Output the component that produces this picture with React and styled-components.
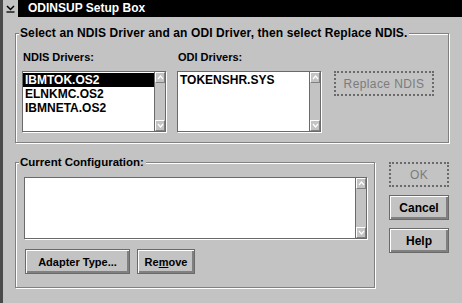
import React from 'react';
import styled, { createGlobalStyle, css } from 'styled-components';

const GlobalStyle = createGlobalStyle`
  html, body {
    margin: 0;
    padding: 0;
    background: #c3c3c3;
  }
  body {
    font-family: "Liberation Sans", Arial, sans-serif;
    font-weight: bold;
    color: #000;
  }
`;

const Window = styled.div`
  width: 462px;
  height: 303px;
  box-sizing: border-box;
  background: #c3c3c3;
  border-left: 3px solid #4a4a4a;
  display: flex;
  flex-direction: column;
`;

const TitleBar = styled.div`
  height: 17px;
  display: flex;
  align-items: stretch;
`;

const SysMenu = styled.div`
  width: 15px;
  display: flex;
  align-items: center;
  justify-content: center;
  background: #c3c3c3;
`;

const Title = styled.div`
  flex: 1;
  background: #000;
  color: #fff;
  font-size: 12px;
  line-height: 17px;
  padding-left: 10px;
`;

const Body = styled.div`
  display: grid;
  grid-template-columns: 360px 60px;
  column-gap: 14px;
  row-gap: 19px;
  padding: 16px 0 0 12px;
`;

const Group = styled.div`
  position: relative;
  box-sizing: border-box;
  border: 1px solid #808080;
  box-shadow: 1px 1px 0 #fff, inset 1px 1px 0 #fff;
  ${p => p.wide && css`grid-column: 1 / span 2;`}
  height: ${p => p.h}px;
  padding: ${p => p.pad};
`;

const Legend = styled.div`
  position: absolute;
  top: -8px;
  left: 3px;
  padding: 0 2px 0 1px;
  background: #c3c3c3;
  font-size: ${p => p.size || 11}px;
  letter-spacing: ${p => p.spacing || 0}px;
  line-height: 15px;
  white-space: nowrap;
`;

const DriverRow = styled.div`
  display: flex;
  align-items: flex-start;
`;

const Column = styled.div`
  width: 144px;
  margin-right: ${p => p.gap}px;
`;

const ColLabel = styled.div`
  font-size: 11px;
  line-height: 14px;
  height: 14px;
  margin-bottom: 7px;
  padding-left: 1px;
  white-space: nowrap;
`;

const ListFrame = styled.div`
  display: flex;
  height: ${p => p.h}px;
  box-sizing: border-box;
  border: 1px solid #6a6a6a;
  box-shadow: 1px 1px 0 #fff;
`;

const ListBody = styled.div`
  flex: 1;
  background: #fff;
  padding-top: 1px;
  overflow: hidden;
`;

const Item = styled.div`
  height: 14px;
  line-height: 14px;
  font-size: 12px;
  padding-left: 2px;
  white-space: nowrap;
  ${p => p.selected && css`
    background: #000;
    color: #fff;
  `}
`;

const ScrollBar = styled.div`
  width: 10px;
  background: #c3c3c3;
  border-left: 1px solid #6a6a6a;
  display: flex;
  flex-direction: column;
  justify-content: space-between;
`;

const Arrow = styled.div`
  height: 11px;
  box-sizing: border-box;
  border-top: 1px solid #fff;
  border-left: 1px solid #fff;
  border-right: 1px solid #808080;
  border-bottom: 1px solid #808080;
  display: flex;
  align-items: center;
  justify-content: center;
`;

const Button = styled.div`
  box-sizing: border-box;
  width: ${p => p.w}px;
  height: ${p => p.h || 25}px;
  display: flex;
  align-items: center;
  justify-content: center;
  font-size: ${p => p.size || 11}px;
  white-space: nowrap;
  border: 1px solid #6a6a6a;
  box-shadow: inset 1px 1px 0 #fff, inset -2px -2px 0 #808080;
  ${p => p.disabled && css`
    border: 2px dotted #6a6a6a;
    box-shadow: none;
    color: #7c7c7c;
    font-weight: normal;
    letter-spacing: 0.4px;
  `}
`;

const ReplaceSlot = styled.div`
  padding-top: 21px;
`;

const ButtonRow = styled.div`
  display: flex;
  gap: 7px;
  margin-top: 10px;
  padding-left: 1px;
`;

const ButtonColumn = styled.div`
  display: flex;
  flex-direction: column;
  gap: 8px;
`;

const Under = styled.span`
  text-decoration: underline;
`;

const UpGlyph = () => (
  <svg width="7" height="5" viewBox="0 0 7 5">
    <path d="M1 4 L3.5 1 L6 4" fill="none" stroke="#fff" strokeWidth="1.2" />
  </svg>
);

const DownGlyph = () => (
  <svg width="7" height="5" viewBox="0 0 7 5">
    <path d="M1 1 L3.5 4 L6 1" fill="none" stroke="#fff" strokeWidth="1.2" />
  </svg>
);

const ListBox = ({ h, items = [], selected }) => (
  <ListFrame h={h}>
    <ListBody>
      {items.map((it, i) => (
        <Item key={it} selected={i === selected}>{it}</Item>
      ))}
    </ListBody>
    <ScrollBar>
      <Arrow><UpGlyph /></Arrow>
      <Arrow><DownGlyph /></Arrow>
    </ScrollBar>
  </ListFrame>
);

export default function App() {
  return (
    <>
      <GlobalStyle />
      <Window>
        <TitleBar>
          <SysMenu>
            <svg width="9" height="8" viewBox="0 0 9 8">
              <path d="M1 1 L4.5 4.5 L8 1" fill="none" stroke="#000" strokeWidth="1.5" />
              <path d="M0.5 7 H8.5" stroke="#000" strokeWidth="1.3" />
            </svg>
          </SysMenu>
          <Title>ODINSUP Setup Box</Title>
        </TitleBar>
        <Body>
          <Group wide h={110} pad="16px 0 0 6px">
            <Legend size={12} spacing={0.1}>Select an NDIS Driver and an ODI Driver, then select Replace NDIS.</Legend>
            <DriverRow>
              <Column gap={11}>
                <ColLabel>NDIS Drivers:</ColLabel>
                <ListBox h={61} items={['IBMTOK.OS2', 'ELNKMC.OS2', 'IBMNETA.OS2']} selected={0} />
              </Column>
              <Column gap={13}>
                <ColLabel>ODI Drivers:</ColLabel>
                <ListBox h={61} items={['TOKENSHR.SYS']} />
              </Column>
              <ReplaceSlot>
                <Button w={100} h={25} size={12} disabled>Replace NDIS</Button>
              </ReplaceSlot>
            </DriverRow>
          </Group>
          <Group h={126} pad="14px 7px 0 8px">
            <Legend size={11.5}>Current Configuration:</Legend>
            <ListBox h={62} />
            <ButtonRow>
              <Button w={105}>Adapter Type...</Button>
              <Button w={58}>Re<Under>m</Under>ove</Button>
            </ButtonRow>
          </Group>
          <ButtonColumn>
            <Button w={60} size={12} disabled>OK</Button>
            <Button w={60} size={12}>Cancel</Button>
            <Button w={60} size={12}>Help</Button>
          </ButtonColumn>
        </Body>
      </Window>
    </>
  );
}
